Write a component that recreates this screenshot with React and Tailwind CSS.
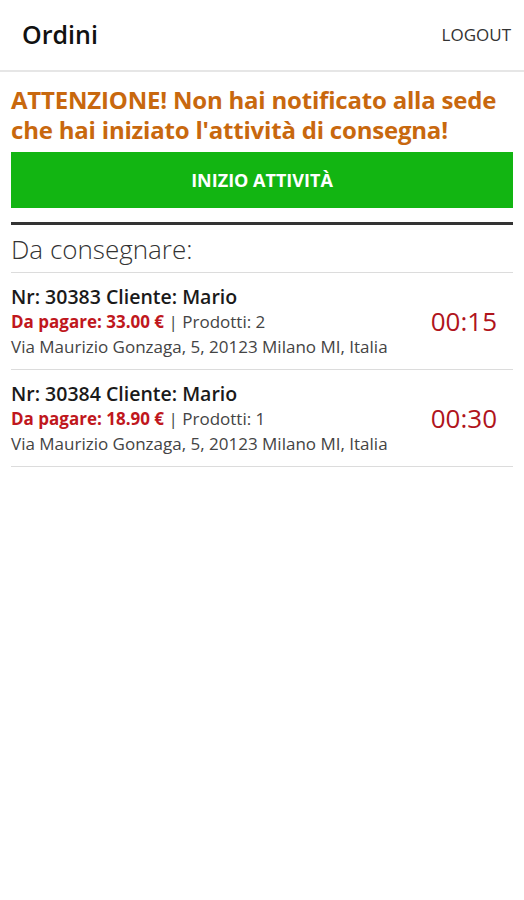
const orders = [
    { nr: 30383, cliente: "Mario", pagare: "33.00", prodotti: 2, time: "00:15" },
    { nr: 30384, cliente: "Mario", pagare: "18.90", prodotti: 1, time: "00:30" },
];

function OrderRow({ order }) {
    return (
        <div className="flex items-center border-b border-[#dcdcdc] pt-[11px] pb-[10px]">
            <div className="flex-1">
                <p className="text-[19.5px] leading-[25px] font-semibold text-[#1a1a1a]">
                    Nr: {order.nr} Cliente: {order.cliente}
                </p>
                <p className="text-[17px] leading-[25px] text-[#444]">
                    <span className="font-bold text-[#c0171d]">Da pagare: {order.pagare} €</span> | Prodotti: {order.prodotti}
                </p>
                <p className="text-[17px] leading-[25px] text-[#444]">
                    Via Maurizio Gonzaga, 5, 20123 Milano MI, Italia
                </p>
            </div>
            <div className="pr-[16px] text-[26px] text-[#b0141c]">{order.time}</div>
        </div>
    );
}

export default function App() {
    return (
        <div className="min-h-[900px] bg-white font-['Open_Sans',sans-serif]">
            {/* Top bar */}
            <div className="flex h-[72px] items-center justify-between border-b-2 border-[#e6e6e6] pl-[22px] pr-[13px]">
                <h1 className="text-[25px] font-semibold text-[#111]">Ordini</h1>
                <button className="text-[17px] text-[#333]">LOGOUT</button>
            </div>

            <div className="px-[11px]">
                <p className="pt-[13px] text-[24px] leading-[30px] font-bold tracking-[-0.2px] text-[#c8680e]">
                    ATTENZIONE! Non hai notificato alla sede che hai iniziato l'attività di consegna!
                </p>
                <button className="mt-[7px] flex h-[56px] w-full items-center justify-center bg-[#12b512] text-[18px] font-bold text-white">
                    INIZIO ATTIVITÀ
                </button>
                <div className="mt-[14px] h-[3px] bg-[#333]" />
                <h2 className="border-b border-[#dcdcdc] pt-[8px] pb-[7px] text-[26px] font-light leading-[32px] text-[#333]">
                    Da consegnare:
                </h2>
                {orders.map((o) => (
                    <OrderRow key={o.nr} order={o} />
                ))}
            </div>
        </div>
    );
}
